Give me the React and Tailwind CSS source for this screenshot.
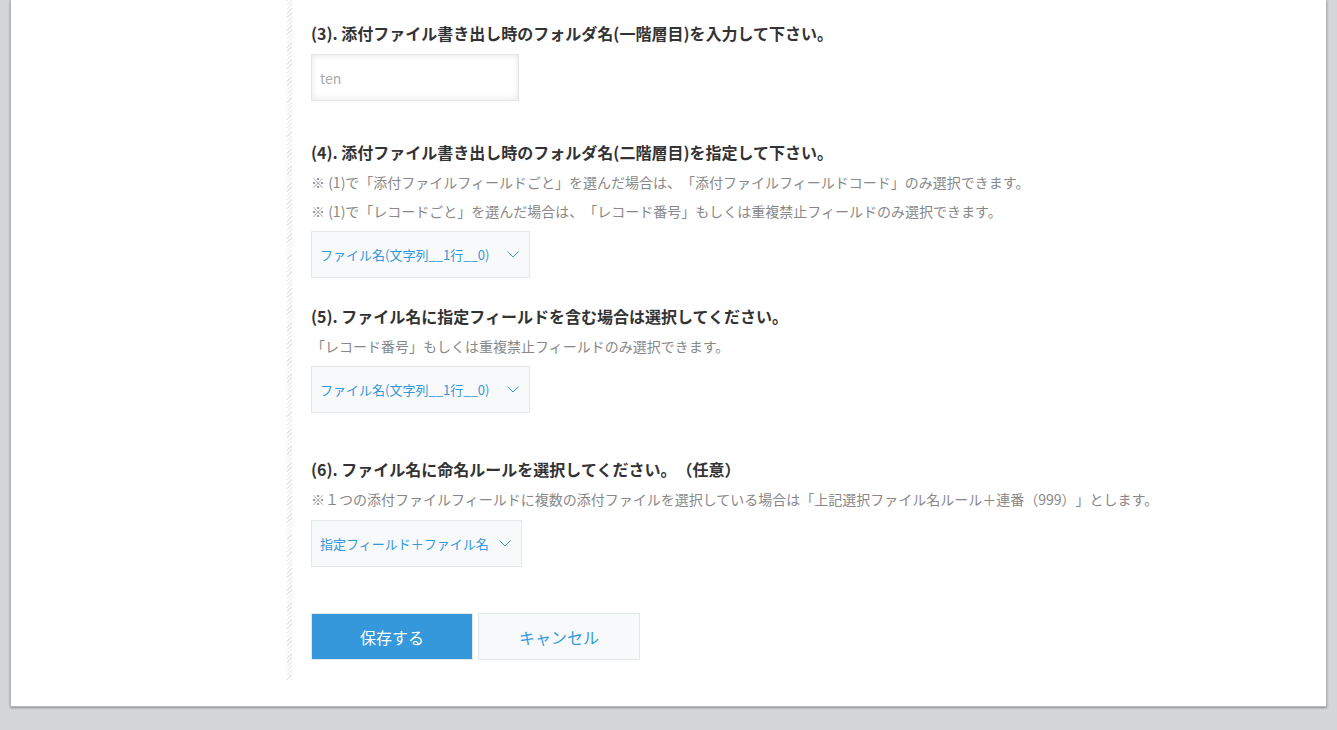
import { useState } from "react";

const font = { fontFamily: '"Noto Sans CJK JP", "Noto Sans", sans-serif' };

function Chevron() {
  return (
    <svg width="12" height="7" viewBox="0 0 12 7" fill="none" className="shrink-0">
      <path d="M0.5 0.5L6 6L11.5 0.5" stroke="#3498db" strokeWidth="1" />
    </svg>
  );
}

function SelectBox({ value, width }) {
  return (
    <div
      className={
        "inline-flex h-[47px] items-center justify-between border border-[#e3e7e8] bg-[#f7f9fa] pl-[8px] pr-[10px] text-[13px] text-[#3498db] " +
        width
      }
    >
      <span>{value}</span>
      <Chevron />
    </div>
  );
}

function Heading({ children, className = "" }) {
  return (
    <h3 className={"text-[16px] font-bold leading-[24px] text-[#333] " + className}>
      {children}
    </h3>
  );
}

function Note({ children }) {
  return <p className="text-[14px] leading-[29px] text-[#888]">{children}</p>;
}

export default function App() {
  const [folder, setFolder] = useState("");

  return (
    <div style={font} className="min-h-[730px] bg-[#d5d6d8] px-[10px] pb-[23px] [text-spacing-trim:space-all]">
      <div className="flex border-x border-b border-[#b7b8ba] bg-white pb-[26px] shadow-[0_1px_2px_rgba(0,0,0,0.35)]">
        <div className="w-[276px] shrink-0" />
        <div className="w-[5px] shrink-0 bg-[repeating-linear-gradient(135deg,#e4e4e4_0_1px,transparent_1px_3px)]" />
        <div className="flex-1 pb-[20px] pl-[19px] pt-[21px]">
          <Heading>(3). 添付ファイル書き出し時のフォルダ名(一階層目)を入力して下さい。</Heading>
          <input
            value={folder}
            onChange={(e) => setFolder(e.target.value)}
            placeholder="ten"
            className="mt-[9px] block h-[47px] w-[208px] border border-[#e3e7e8] px-[8px] text-[14px] text-[#333] shadow-[inset_0_0_7px_rgba(0,0,0,0.1)] outline-none placeholder:text-[#aaa]"
          />

          <Heading className="mt-[39px]">(4). 添付ファイル書き出し時のフォルダ名(二階層目)を指定して下さい。</Heading>
          <div className="mt-[4px]">
            <Note>※ (1)で「添付ファイルフィールドごと」を選んだ場合は、「添付ファイルフィールドコード」のみ選択できます。</Note>
            <Note>※ (1)で「レコードごと」を選んだ場合は、「レコード番号」もしくは重複禁止フィールドのみ選択できます。</Note>
          </div>
          <div className="mt-[5px]">
            <SelectBox value="ファイル名(文字列__1行__0)" width="w-[219px]" />
          </div>

          <Heading className="mt-[26px]">(5). ファイル名に指定フィールドを含む場合は選択してください。</Heading>
          <div className="mt-[4px]">
            <Note>「レコード番号」もしくは重複禁止フィールドのみ選択できます。</Note>
          </div>
          <div className="mt-[5px]">
            <SelectBox value="ファイル名(文字列__1行__0)" width="w-[219px]" />
          </div>

          <Heading className="mt-[44px]">(6). ファイル名に命名ルールを選択してください。（任意）</Heading>
          <div className="mt-[4px]">
            <Note>※１つの添付ファイルフィールドに複数の添付ファイルを選択している場合は「上記選択ファイル名ルール＋連番（999）」とします。</Note>
          </div>
          <div className="mt-[6px]">
            <SelectBox value="指定フィールド＋ファイル名" width="w-[211px]" />
          </div>

          <div className="mt-[46px] flex gap-[5px]">
            <button className="h-[47px] w-[162px] border border-[#e3e7e8] bg-[#3498db] text-[16px] text-white">
              保存する
            </button>
            <button className="h-[47px] w-[162px] border border-[#e3e7e8] bg-[#f7f9fa] text-[16px] text-[#3498db]">
              キャンセル
            </button>
          </div>
        </div>
      </div>
    </div>
  );
}
